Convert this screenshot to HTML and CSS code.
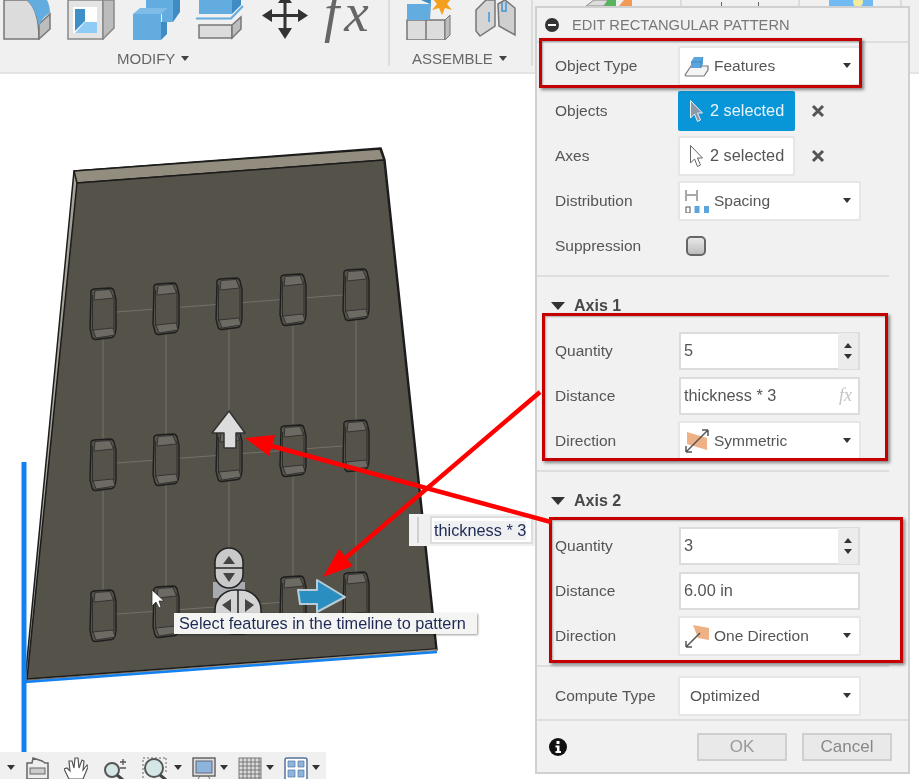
FILE: index.html
```html
<!DOCTYPE html>
<html lang="en">
<head>
<meta charset="utf-8">
<title>Edit Rectangular Pattern</title>
<link rel="stylesheet" href="styles.css">
</head>
<body>
<svg class="defs" width="0" height="0" aria-hidden="true">
  <symbol id="hole" viewBox="0 0 28 54">
    <path d="M2 6Q1 3 5 2L21 1Q24 1 25 4L27 12V42L26 47Q25 50 23 50.500L7 52.500Q4 53 3 50L1 42Z" fill="#55524a" stroke="#1e1e1e" stroke-width="1.400"/>
    <path d="M6 3.500L21 2.500L24.500 11L5 13Z" fill="#6d6a63" stroke="#2a2a2a" stroke-width=".8"/>
    <path d="M4 43L24 41L26 48L7 51Z" fill="#6d6a63" stroke="#2a2a2a" stroke-width=".8"/>
    <path d="M3.500 8V44M25 8V42" fill="none" stroke="#2a2a2a" stroke-width=".9"/>
  </symbol>
  <symbol id="cursor" viewBox="0 0 15 24">
    <path d="M1.500 1.500V19L5.500 15L8.500 22.500L11.500 21L8.500 14H13.500Z"/>
  </symbol>
</svg>

<div class="stage">
  <header class="toolbar">
    <section class="group group-modify">
      <div class="tool-icons">
        <svg class="tool" viewBox="0 0 48 40"><path d="M1 39V0H24C32 6 36 20 36 39Z" fill="#dcdcdc" stroke="#777" stroke-width="1.500"/><path d="M36 39L47 29V14L36 24Z" fill="#bdbdbd" stroke="#777" stroke-width="1.500"/><path d="M24 0H44C46 4 47 8 47 13C43 15 38 19 36 27C34 15 30 6 24 0Z" fill="#63ace0"/></svg>
        <svg class="tool" viewBox="0 0 48 40"><path d="M1 39V0H36V39Z" fill="#e4e4e4" stroke="#888" stroke-width="1.500"/><path d="M36 39L47 28V0H36Z" fill="#bcbcbc" stroke="#888" stroke-width="1.500"/><path d="M6 7H30V33H6Z" fill="#fff"/><path d="M8 9H18V21L8 31Z" fill="#3f8fc9"/><path d="M18 22H30V33H8Z" fill="#8ecbf5"/></svg>
        <svg class="tool" viewBox="0 0 48 40"><path d="M14 0H41V22H30V14H14Z" fill="#63ace0"/><path d="M41 0H48V12L41 22Z" fill="#3f8cc4"/><path d="M1 14H29V40H1Z" fill="#63ace0"/><path d="M1 14L8 8H36L29 14Z" fill="#7fbbe7"/><path d="M29 40L35 34V22H29Z" fill="#3f8cc4"/></svg>
        <svg class="tool" viewBox="0 0 48 40"><path d="M3 0H36V14H3Z" fill="#63ace0"/><path d="M36 0H45V5L36 14Z" fill="#3f8cc4"/><path d="M0 18.500H35L47 6" fill="none" stroke="#63ace0" stroke-width="2"/><path d="M3 25H36V38H3Z" fill="#dcdcdc" stroke="#777" stroke-width="1.500"/><path d="M36 38L45 29V17L36 25Z" fill="#bdbdbd" stroke="#777" stroke-width="1.500"/></svg>
        <svg class="tool" viewBox="0 0 48 40"><path d="M1 15.500L11 9V14H22.500V3H17L24 -7L31 3H25.500V14H37V9L47 15.500L37 22V17H25.500V28H31L24 39L17 28H22.500V17H11V22Z" fill="#333"/></svg>
        <svg class="tool tool-fx" viewBox="0 0 48 40"><text class="fx-large" x="-1" y="31">fx</text></svg>
      </div>
      <div class="group-label label-modify">MODIFY<span class="caret"></span></div>
    </section>
    <section class="group group-assemble">
      <div class="tool-icons">
        <svg class="tool" viewBox="0 0 48 40"><path d="M1 20H24V40H1Z" fill="#dcdcdc" stroke="#777" stroke-width="1.500"/><path d="M20 20H39V40H20Z" fill="#dcdcdc" stroke="#777" stroke-width="1.500"/><path d="M39 40L44 35V15L39 20Z" fill="#bdbdbd" stroke="#777"/><path d="M1 4H24V20H1Z" fill="#63ace0"/><path d="M24 20L25 0H15L24 4Z" fill="#3f8cc4"/><path d="M36 -8L38 0L46 -2L41 4L46 10L39 8L36 15L33 8L26 10L31 4L26 -2L34 0Z" fill="#f59f1f"/></svg>
        <svg class="tool" viewBox="0 0 44 40"><path d="M2 10L12 0H21V26L6 36L2 31Z" fill="#d5d5d5" stroke="#777" stroke-width="1.500"/><path d="M24 4L31 0L41 8V35L25 26Z" fill="#cfcfcf" stroke="#777" stroke-width="1.500"/><path d="M15 12V22M28 2V11H32V2" fill="none" stroke="#3f96d8" stroke-width="1.500"/></svg>
      </div>
      <div class="group-label label-assemble">ASSEMBLE<span class="caret"></span></div>
    </section>
    <section class="group group-c">
      <svg class="peek peek-c" viewBox="0 0 48 6"><path d="M0 6L8 0H22L18 6Z" fill="#ddd" stroke="#888"/><path d="M18 6L22 0H30V6Z" fill="#57b35c"/><path d="M33 6L38 0H46V6Z" fill="#ef9a55"/></svg>
    </section>
    <section class="group group-d">
      <span class="tick"></span><span class="tick"></span>
    </section>
    <section class="group group-e">
      <svg class="peek peek-e" viewBox="0 0 44 6"><rect width="44" height="6" fill="#71baf3"/><circle cx="29" cy="2" r="5" fill="#f5eb9c"/></svg>
    </section>
  </header>

  <svg class="scene" viewBox="0 0 919 779">
    <path d="M74 171L381 148L385 160L437 650L25 681Z" fill="#a6a297" stroke="#1c1c1c" stroke-width="1.500" stroke-linejoin="round"/>
    <path d="M74 171L380 149L384 160L77 183Z" fill="#928d7e" stroke="#1c1c1c" stroke-width="1.500" stroke-linejoin="round"/>
    <path d="M77 183L384 160L436 649L27 679Z" fill="#55524a" stroke="#1c1c1c" stroke-width="1.500"/>
    <path d="M27 681L437 650" stroke="#a09c92" stroke-width="1.500"/>
    <path d="M25 682L437 652" stroke="#1481f0" stroke-width="2.500"/>
    <path d="M24 462V752" stroke="#1481f0" stroke-width="5"/>
    <g stroke="#74716a" stroke-width="1" fill="none">
      <path d="M103 313L356 294M103 464L356 445M103 615L356 597"/>
      <path d="M103 313V615M166 308V611M229 303V606M293 299V601M356 294V597"/>
    </g>
    <use href="#hole" x="89" y="287" width="28" height="54"/>
    <use href="#hole" x="152" y="282" width="28" height="54"/>
    <use href="#hole" x="215" y="277" width="28" height="54"/>
    <use href="#hole" x="279" y="273" width="28" height="54"/>
    <use href="#hole" x="342" y="268" width="28" height="54"/>
    <use href="#hole" x="89" y="438" width="28" height="54"/>
    <use href="#hole" x="152" y="433" width="28" height="54"/>
    <use href="#hole" x="215" y="429" width="28" height="54"/>
    <use href="#hole" x="279" y="424" width="28" height="54"/>
    <use href="#hole" x="342" y="419" width="28" height="54"/>
    <use href="#hole" x="89" y="589" width="28" height="54"/>
    <use href="#hole" x="152" y="585" width="28" height="54"/>
    <use href="#hole" x="279" y="575" width="28" height="54"/>
    <use href="#hole" x="342" y="571" width="28" height="54"/>

    <path d="M229 411L245 433H236V448H224V433H212Z" fill="#dcdcdc" stroke="#333" stroke-width="1.500" stroke-linejoin="round"/>

    <path d="M213 582H245V598H213Z" fill="#a8abb0"/>
    <rect x="215" y="548" width="28" height="40" rx="14" fill="#c9c9c9" stroke="#222" stroke-width="1.500"/>
    <path d="M215 568H243" stroke="#222" stroke-width="1.500"/>
    <path d="M229 556L235 564H223ZM229 582L223 573H235Z" fill="#444"/>
    <rect x="215" y="590" width="46" height="44" rx="20" fill="#d4d4d4" stroke="#222" stroke-width="1.500"/>
    <path d="M238 590V632" stroke="#222" stroke-width="1.500"/>
    <path d="M222 605L231 599V612ZM254 605L245 599V612Z" fill="#444"/>

    <path d="M298 590H317V580L345 597L317 612V604H300Z" fill="#2a8ec0" stroke="#b7ccd6" stroke-width="2" stroke-linejoin="round"/>
    <path d="M152 590V606L156 602L159 608L161 607L159 601H164Z" fill="#fff" stroke="#222" stroke-width=".7"/>
  </svg>

  <div class="view-tools">
    <span class="caret caret-dark"></span>
    <svg class="vt" viewBox="0 0 24 22"><path d="M2 22V6L7 6L8 1L17 4L20 6H23V22Z" fill="#eee" stroke="#666" stroke-width="1.500"/><rect x="5" y="11" width="15" height="6" fill="#ccc" stroke="#666"/></svg>
    <svg class="vt vt-wide" viewBox="0 0 24 22"><path d="M5 22L0 12L3 11L6 14L5 4L8 4L10 11L11 1H14L15 11L18 3L20 4L19 13L23 8L24 10L19 22Z" fill="#fff" stroke="#555" stroke-width="1.200"/></svg>
    <svg class="vt vt-wide" viewBox="0 0 24 22"><circle cx="9" cy="13" r="7" fill="#d5e6e6" stroke="#555" stroke-width="2"/><path d="M14 18L20 23" stroke="#444" stroke-width="3"/><path d="M17 5H23M20 2V8M17 11H23" stroke="#555" stroke-width="1.300"/></svg>
    <svg class="vt vt-wide vt-fit" viewBox="0 0 28 22" preserveAspectRatio="xMinYMin"><path d="M1 3V22M24 1V16M1 1H24" fill="none" stroke="#666" stroke-dasharray="2 2"/><circle cx="12" cy="11" r="9" fill="#d5e6e6" stroke="#555" stroke-width="2"/><path d="M18 18L24 23" stroke="#444" stroke-width="3"/></svg>
    <span class="caret caret-dark"></span>
    <svg class="vt" viewBox="0 0 24 22"><rect x="1" y="1" width="22" height="18" fill="#ddd" stroke="#666" stroke-width="1.500"/><rect x="4" y="4" width="16" height="12" fill="#8db4dd" stroke="#667"/><path d="M8 19L6 22M16 19L18 22" stroke="#666"/></svg>
    <span class="caret caret-dark"></span>
    <svg class="vt" viewBox="0 0 24 22"><rect x="1" y="1" width="22" height="22" fill="#ddd" stroke="#777"/><path d="M5 1V23M9 1V23M13 1V23M17 1V23M21 1V23M1 5H23M1 9H23M1 13H23M1 17H23M1 21H23" stroke="#777"/></svg>
    <span class="caret caret-dark"></span>
    <svg class="vt" viewBox="0 0 24 22"><rect x="1" y="1" width="22" height="22" rx="2" fill="#fff" stroke="#55729c" stroke-width="1.500"/><path d="M4 4H11V10H4ZM14 4H20V10H14ZM4 13H11V20H4ZM14 13H20V20H14Z" fill="#8db4dd" stroke="#55729c" stroke-width=".7"/></svg>
    <span class="caret caret-dark"></span>
  </div>

  <div class="value-chip">
    <span class="grip"></span>
    <span class="chip-field"><span class="chip-text">thickness * 3</span></span>
  </div>

  <div class="tooltip">Select features in the timeline to pattern</div>

  <aside class="panel">
    <div class="panel-head">
      <svg class="minus" viewBox="0 0 14 14"><circle cx="7" cy="7" r="7" fill="#333"/><rect x="3" y="6" width="8" height="2" fill="#fff"/></svg>
      <span class="panel-title">EDIT RECTANGULAR PATTERN</span>
    </div>
    <div class="section">
      <div class="row">
        <span class="label">Object Type</span>
        <div class="control select">
          <svg class="ctl-icon" viewBox="0 0 26 24"><path d="M1 21L7 12H24V16L20 22H2Z" fill="#f4f4f4" stroke="#777" stroke-width="1.200"/><path d="M7 8L10 3H19V10L17 14H7Z" fill="#5aa5dd"/><path d="M7 8H17V14M17 8L19 3" fill="none" stroke="#3d85bb" stroke-width=".8"/></svg>
          <span class="value">Features</span><span class="caret caret-dark"></span>
        </div>
      </div>
      <div class="row">
        <span class="label">Objects</span>
        <div class="control pick pick-active">
          <svg class="pointer" viewBox="0 0 15 24"><use href="#cursor" fill="#8a9aa8" stroke="#eee"/></svg>
          <span class="value">2 selected</span>
        </div>
        <svg class="clear" viewBox="0 0 14 14"><path d="M2 2L12 12M12 2L2 12" stroke="#555" stroke-width="3"/></svg>
      </div>
      <div class="row">
        <span class="label">Axes</span>
        <div class="control pick">
          <svg class="pointer" viewBox="0 0 15 24"><use href="#cursor" fill="#fff" stroke="#666"/></svg>
          <span class="value">2 selected</span>
        </div>
        <svg class="clear" viewBox="0 0 14 14"><path d="M2 2L12 12M12 2L2 12" stroke="#555" stroke-width="3"/></svg>
      </div>
      <div class="row">
        <span class="label">Distribution</span>
        <div class="control select">
          <svg class="ctl-icon" viewBox="0 0 26 24"><path d="M2 1V12M13 1V12M3 6H12" stroke="#555" fill="none"/><rect x="2" y="18" width="4" height="6" fill="#fff" stroke="#555"/><rect x="10.500" y="17" width="5" height="7" fill="#5aa5dd"/><rect x="20" y="17" width="5" height="7" fill="#5aa5dd"/></svg>
          <span class="value">Spacing</span><span class="caret caret-dark"></span>
        </div>
      </div>
      <div class="row">
        <span class="label">Suppression</span>
        <span class="checkbox"></span>
      </div>
    </div>

    <div class="section">
      <div class="section-head"><span class="disclosure"></span><span class="section-title">Axis 1</span></div>
      <div class="row">
        <span class="label">Quantity</span>
        <div class="control number"><span class="text-value">5</span><span class="spinner"><span class="spin-up"></span><span class="spin-down"></span></span></div>
      </div>
      <div class="row">
        <span class="label">Distance</span>
        <div class="control number"><span class="text-value">thickness * 3</span><span class="fx-small">fx</span></div>
      </div>
      <div class="row">
        <span class="label">Direction</span>
        <div class="control select">
          <svg class="ctl-icon" viewBox="0 0 26 24"><path d="M3 3L23 9V21L3 15Z" fill="#eeb185"/><path d="M2 23L24 1M24 1H18M24 1V7M2 23H8M2 23V17" fill="none" stroke="#555" stroke-width="1.500"/></svg>
          <span class="value">Symmetric</span><span class="caret caret-dark"></span>
        </div>
      </div>
    </div>

    <div class="section">
      <div class="section-head"><span class="disclosure"></span><span class="section-title">Axis 2</span></div>
      <div class="row">
        <span class="label">Quantity</span>
        <div class="control number"><span class="text-value">3</span><span class="spinner"><span class="spin-up"></span><span class="spin-down"></span></span></div>
      </div>
      <div class="row">
        <span class="label">Distance</span>
        <div class="control number"><span class="text-value">6.00 in</span></div>
      </div>
      <div class="row">
        <span class="label">Direction</span>
        <div class="control select">
          <svg class="ctl-icon" viewBox="0 0 26 24"><path d="M9 1L25 4V16L14 14Z" fill="#eeb185"/><path d="M2 23L16 9M2 23H8M2 23V17" fill="none" stroke="#555" stroke-width="1.500"/></svg>
          <span class="value">One Direction</span><span class="caret caret-dark"></span>
        </div>
      </div>
    </div>

    <div class="compute">
      <div class="row">
        <span class="label">Compute Type</span>
        <div class="control select select-plain">
          <span class="value">Optimized</span><span class="caret caret-dark"></span>
        </div>
      </div>
    </div>

    <div class="panel-foot">
      <svg class="info" viewBox="0 0 18 18"><circle cx="9" cy="9" r="9" fill="#111"/><rect x="7.500" y="3" width="3" height="3" fill="#fff"/><path d="M6.500 7.500H10.500V13H12V15H6.500V13H8V9.500H6.500Z" fill="#fff"/></svg>
      <button class="btn btn-ok" type="button">OK</button>
      <button class="btn btn-cancel" type="button">Cancel</button>
    </div>
  </aside>

  <div class="callout callout-type"></div>
  <div class="callout callout-axis1"></div>
  <div class="callout callout-axis2"></div>

  <svg class="arrows" viewBox="0 0 919 779">
    <path d="M540 392L342 561" stroke="#f00" stroke-width="4.500"/>
    <path d="M323 577L353 566L339 549Z" fill="#f00"/>
    <path d="M551 522L268 445" stroke="#f00" stroke-width="4.500"/>
    <path d="M245 438L269 456L275 435Z" fill="#f00"/>
  </svg>
</div>
</body>
</html>
```

FILE: styles.css
```css
* { box-sizing: border-box; }

html, body {
  margin: 0;
  padding: 0;
  background: #fff;
}

body {
  width: 919px;
  height: 779px;
  overflow: hidden;
  font-family: "Liberation Sans", Arial, sans-serif;
}

.defs { position: absolute; }

.stage {
  position: relative;
  width: 919px;
  height: 779px;
  background: #fff;
  overflow: hidden;
  filter: blur(0.5px);
}

/* top ribbon */
.toolbar {
  display: flex;
  height: 74px;
  background: #f0f0f0;
  border-bottom: 2px solid #e3e3e3;
}

.group {
  position: relative;
  height: 66px;
  border-right: 2px solid #dcdcdc;
  flex: none;
  overflow: hidden;
}

.group-modify { width: 390px; }
.group-assemble { width: 143px; }
.group-c { width: 149px; }
.group-d { width: 118px; display: flex; gap: 36px; padding-left: 39px; }
.group-e { width: 102px; }

.tool-icons {
  display: flex;
  gap: 16.4px;
  padding-left: 3px;
  height: 41px;
}

.group-assemble .tool-icons {
  padding-left: 16px;
  gap: 20px;
}

.tool {
  display: block;
  width: 48px;
  height: 40px;
  flex: none;
  overflow: hidden;
}

.tool-fx { overflow: visible; }

.group-assemble .tool:last-child { width: 44px; }

.fx-large {
  font-family: "Liberation Serif", serif;
  font-style: italic;
  font-size: 55px;
  letter-spacing: 5px;
  fill: #666;
}

.group-label {
  display: flex;
  align-items: center;
  height: 20px;
  margin-top: 7px;
  font-size: 15px;
  color: #666;
}

.label-modify { padding-left: 117px; }
.label-assemble { padding-left: 22px; }

.caret {
  display: inline-block;
  flex: none;
  width: 0;
  height: 0;
  margin-left: 6px;
  border-left: 4px solid transparent;
  border-right: 4px solid transparent;
  border-top: 5px solid #444;
}

.caret-dark { border-top-color: #333; }

.peek { display: block; height: 6px; }
.peek-c { width: 48px; margin-left: 53px; }
.peek-e { width: 44px; margin-left: 29px; }

.tick {
  display: block;
  width: 1px;
  height: 5px;
  margin-top: 2px;
  background: #666;
}

/* 3D model */
.scene,
.arrows {
  position: absolute;
  left: 0;
  top: 0;
  width: 919px;
  height: 779px;
}

.arrows { pointer-events: none; }

/* view toolbar */
.view-tools {
  position: absolute;
  left: 0;
  bottom: 0;
  width: 326px;
  height: 27px;
  padding: 5px 0 0 7px;
  display: flex;
  align-items: flex-start;
  gap: 4px;
  background: #f0f0f0;
  overflow: hidden;
}

.view-tools .caret { margin: 8px 0 0 0; }

.vt {
  display: block;
  flex: none;
  width: 24px;
  height: 22px;
  margin-left: 6px;
}

.vt-wide { margin-left: 11px; }
.vt-fit { width: 28px; }

/* floating value */
.value-chip {
  position: absolute;
  left: 409px;
  top: 514px;
  width: 127px;
  height: 32px;
  display: flex;
  background: #f0f0f0;
}

.grip {
  width: 21px;
  flex: none;
  margin: 3px 0;
  background: linear-gradient(90deg, #f0f0f0 8px, #d0d0d0 8px, #d0d0d0 10px, #f0f0f0 10px);
}

.chip-field {
  display: flex;
  align-items: center;
  width: 103px;
  margin: 2px 0;
  padding-left: 2px;
  background: #fff;
  border: 2px solid #ddd;
}

.chip-text {
  font-size: 16.300px;
  color: #1e2a55;
  background: #eef0f2;
  white-space: nowrap;
}

.tooltip {
  position: absolute;
  left: 174px;
  top: 613px;
  width: 303px;
  height: 21px;
  padding-left: 5px;
  line-height: 21px;
  font-size: 16.300px;
  color: #1e2a55;
  background: #f4f4f2;
  box-shadow: 1px 1px 2px rgba(0, 0, 0, 0.4);
  white-space: nowrap;
}

/* dialog */
.panel {
  position: absolute;
  left: 535px;
  top: 6px;
  width: 375px;
  height: 768px;
  background: #f1f1f1;
  border: 2px solid #d0d0d0;
  color: #555;
  font-size: 15.5px;
}

.panel-head {
  display: flex;
  align-items: center;
  height: 35px;
  padding-left: 8px;
  border-bottom: 2px solid #dedede;
}

.minus {
  width: 14px;
  height: 14px;
  flex: none;
}

.panel-title {
  margin-left: 13px;
  font-size: 14.7px;
  color: #777;
  white-space: nowrap;
}

.section {
  margin-right: 19px;
  padding-bottom: 7px;
  border-bottom: 2px solid #dedede;
}

.section-head {
  display: flex;
  align-items: center;
  height: 51px;
  padding: 6px 0 0 14px;
}

.disclosure {
  width: 0;
  height: 0;
  border-left: 7px solid transparent;
  border-right: 7px solid transparent;
  border-top: 8px solid #333;
}

.section-title {
  margin-left: 9px;
  font-size: 16px;
  font-weight: bold;
  color: #484848;
}

.row {
  display: flex;
  align-items: center;
  height: 45px;
  padding-left: 18px;
}

.label {
  flex: none;
  width: 123px;
  white-space: nowrap;
}

.control {
  display: flex;
  align-items: center;
  height: 40px;
  background: #fff;
  border: 2px solid #e6e6e6;
  border-radius: 2px;
}

.select {
  width: 183px;
  padding: 0 8px 0 4px;
}

.select-plain { padding-left: 10px; }

.select .value {
  flex: 1;
  white-space: nowrap;
}

.ctl-icon {
  width: 26px;
  height: 24px;
  flex: none;
  margin-right: 4px;
}

.pick {
  width: 117px;
  padding-left: 9px;
}

.pick .value { font-size: 16.300px; white-space: nowrap; }

.pick-active {
  background: #0896d8;
  border-color: #0896d8;
  color: #e8f4fb;
}

.pointer {
  width: 15px;
  height: 24px;
  flex: none;
  margin-right: 6px;
}

.clear {
  width: 14px;
  height: 14px;
  margin-left: 16px;
  flex: none;
}

.checkbox {
  display: block;
  width: 20px;
  height: 20px;
  margin-left: 8px;
  border: 2px solid #666;
  border-radius: 5px;
  background: linear-gradient(#e8e8e8, #bdbdbd);
}

.number {
  width: 181px;
  height: 38px;
  margin-left: 1px;
  padding-left: 3px;
  border-color: #dcdcdc;
  border-radius: 0;
}

.text-value {
  flex: 1;
  font-size: 16.300px;
  white-space: nowrap;
}

.spinner {
  display: flex;
  flex-direction: column;
  align-items: center;
  justify-content: space-around;
  width: 20px;
  height: 36px;
  padding: 7px 0;
  background: #ececec;
}

.spin-up,
.spin-down {
  width: 0;
  height: 0;
  border-left: 4px solid transparent;
  border-right: 4px solid transparent;
}

.spin-up { border-bottom: 5px solid #333; }
.spin-down { border-top: 5px solid #333; }

.fx-small {
  margin-right: 6px;
  font-family: "Liberation Serif", serif;
  font-style: italic;
  font-size: 18px;
  color: #c4c4c4;
}

.compute {
  padding-top: 6px;
  height: 54px;
  border-bottom: 2px solid #dedede;
}

.panel-foot {
  display: flex;
  align-items: center;
  height: 50px;
  padding: 2px 16px 0 12px;
}

.info {
  width: 18px;
  height: 18px;
  flex: none;
}

.btn {
  height: 28px;
  width: 90px;
  padding: 0;
  font-family: inherit;
  font-size: 17px;
  background: #e9e9e9;
  border: 2px solid #cfcfcf;
}

.btn-ok {
  margin-left: 130px;
  color: #999;
}

.btn-cancel {
  margin-left: 15px;
  color: #888;
}

/* annotation rectangles */
.callout {
  position: absolute;
  border: 3px solid #c40000;
  box-shadow: 2px 2px 3px rgba(0, 0, 0, 0.45), inset 1px 1px 2px rgba(0, 0, 0, 0.3);
}

.callout-type { left: 539px; top: 38px; width: 323px; height: 50px; }
.callout-axis1 { left: 542px; top: 313px; width: 346px; height: 148px; }
.callout-axis2 { left: 549px; top: 517px; width: 354px; height: 146px; }
```
